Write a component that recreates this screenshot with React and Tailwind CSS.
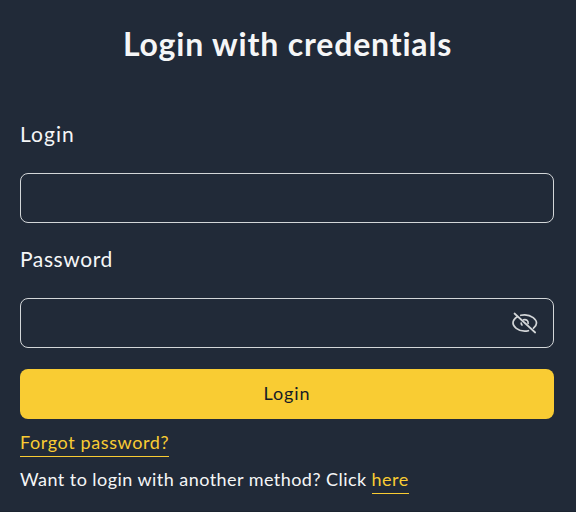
function EyeOff() {
  return (
    <svg width="28" height="24" viewBox="0 0 28 24" fill="none" stroke="#d3d6d8" strokeWidth="1.7" strokeLinecap="round">
      <path d="M3.500 2.500 24.200 21.500" />
      <path d="M6.300 5.800C3.500 7.600 2 10.200 2 12c0 3.400 4.800 8.200 11.700 8.200 1.300 0 2.600-.2 3.700-.5" />
      <path d="M9.800 4.300c1.200-.3 2.500-.5 3.900-.5C20.600 3.800 25.500 8.500 25.500 12c0 1.700-1.100 3.600-3 5.200" />
      <path d="M12.500 8.800c3-.8 5 1.200 4.600 3.700" />
      <path d="M10.200 12c0 .8.300 1.500.8 2" />
    </svg>
  );
}

export default function App() {
  return (
    <main className="flex h-[512px] w-[576px] flex-col border-b border-[#1c2531] bg-[#212a38] pr-[22px] pl-5 font-['Lato',sans-serif] text-[#f5f6f7]">
      <h1 className="mt-6 pl-px text-center text-[32px] leading-10 font-bold tracking-[0.82px] whitespace-nowrap">Login with credentials</h1>
      <form className="mt-14 flex flex-col" onSubmit={(e) => e.preventDefault()}>
        <label htmlFor="login" className="text-[21px] leading-7 tracking-[1.05px]">Login</label>
        <input id="login" className="mt-[25px] h-[50px] rounded-lg border border-[#d3d6d8] bg-transparent px-4 outline-none" />
        <label htmlFor="password" className="mt-[22px] text-[21px] leading-7 tracking-[0.6px]">Password</label>
        <div className="mt-[25px] flex h-[50px] items-center rounded-lg border border-[#d3d6d8] pr-[14px]">
          <input id="password" type="password" className="h-full min-w-0 flex-1 bg-transparent px-4 outline-none" />
          <button type="button" aria-label="Show password"><EyeOff /></button>
        </div>
        <button className="mt-[21px] h-[50px] rounded-lg bg-[#f9cc33] pb-0.5 text-[18px] tracking-[0.9px] text-[#161c26]">Login</button>
      </form>
      <a className="mt-[10px] h-7 self-start border-b border-[#f9cc33] text-[18px] leading-[26px] tracking-[0.61px] text-[#f9cc33]">Forgot password?</a>
      <p className="mt-[9px] flex gap-[5px] text-[18px] leading-[26px] tracking-[0.45px] whitespace-nowrap">
        <span>Want to login with another method? Click</span>
        <a className="h-7 border-b border-[#f9cc33] text-[#f9cc33]">here</a>
      </p>
    </main>
  );
}
